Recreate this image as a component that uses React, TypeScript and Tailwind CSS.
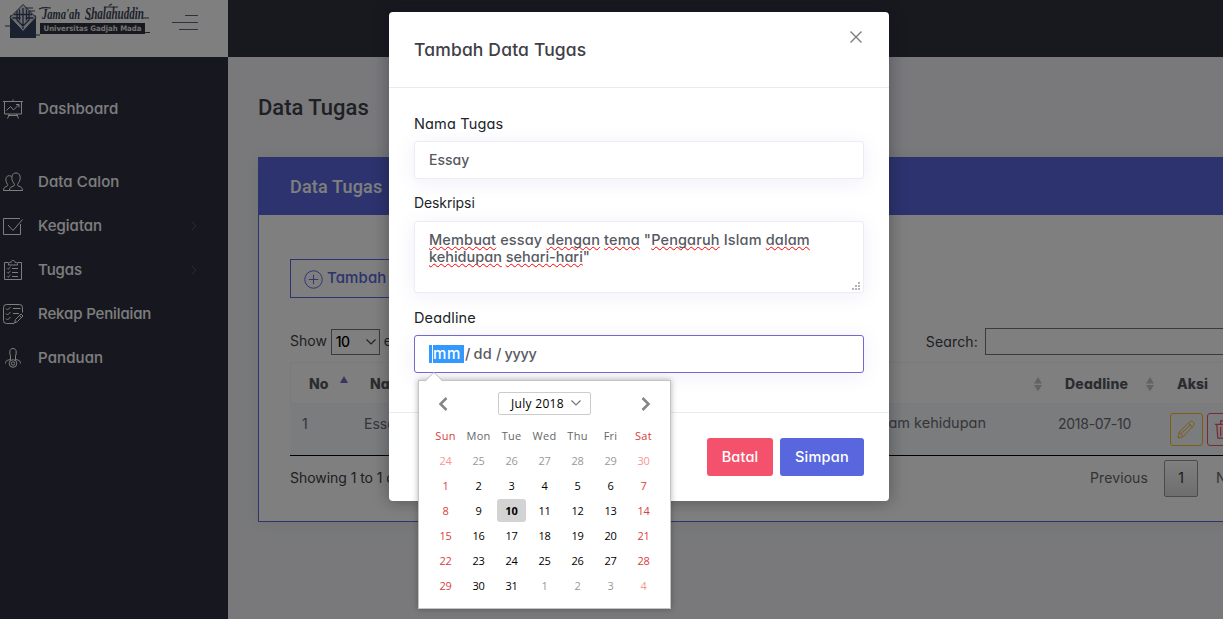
import type { ReactNode } from "react";

const Svg = ({ children, className }: { children: ReactNode; className?: string }) => (
  <svg viewBox="0 0 20 20" fill="none" stroke="currentColor" strokeWidth="1" className={className ?? "size-5 shrink-0"}>
    {children}
  </svg>
);

const BoardIcon = () => (
  <Svg>
    <path d="M0 2.500h20M1.500 2.500v12.500h17v-12.500M10 .5v2M4.500 19.500l2-4.500M15.500 19.500l-2-4.500M5 16.500h10" />
    <path d="M3.500 11.500l4-4 3 3.500 5.500-5.500M13 5.500h3v3" />
  </Svg>
);
const UsersIcon = () => (
  <Svg>
    <path d="M6.500 18.500h13c0-3-1.500-3.500-4.500-4.700-.8-.5-.5-1.700 0-2.300 2-2.500 2.500-5 2-7.500C16.500 1.800 15 1 13 1S9.500 1.800 9 4c-.5 2.500 0 5 2 7.500.5.600.8 1.800 0 2.300-3 1.200-4.500 1.700-4.500 4.700z" />
    <path d="M8.500 4.500C6 2.800 3.300 4 3 6.500c-.3 2.300.2 4 1.500 5.700.5.800.3 1.500-.3 1.800C2 15 .5 15.500.5 18.500h6" />
  </Svg>
);
const CheckIcon = () => (
  <Svg>
    <path d="M17.500 8v10.500H.5v-16H17M5 9l5 5.500 9.500-11" />
  </Svg>
);
const ClipboardIcon = () => (
  <Svg>
    <path d="M5.500 2.500H1.500v17h17v-17h-4M5.500 5h9V3.500c-.3-1-1.500-1-2.500-1C12 .9 11 .5 10 .5S8 .9 8 2.500c-1 0-2.200 0-2.500 1z" />
    <path d="M9 8.500h6M9 12.500h6M9 16.500h6M4 8.300l1 1L7.500 7M4 12.300l1 1L7.500 11M4 16.300l1 1L7.500 15" />
  </Svg>
);
const ListPenIcon = () => (
  <Svg>
    <path d="M11 19.500H3.500a3 3 0 0 1-3-3v-13a3 3 0 0 1 3-3h13a3 3 0 0 1 3 3v5" />
    <path d="M3 4.500L4.500 6l3-3M3 9.500L4.500 11l3-3M3 14.500L4.500 16l3-3M10 4.500h7.500M10 9.500h6" />
    <path d="M11.500 19l1-3.500 5.500-5.500 2 2-5.500 5.500zM16.500 11.500l2 2" />
  </Svg>
);
const GuideIcon = () => (
  <Svg>
    <path d="M7.500 12V8c-.7-1.500-.7-2.500-.7-4C6.800 1.800 8 .5 10 .5S13.200 1.800 13.200 4c0 1.500 0 2.500-.7 4v4M2.500 15.500v-1C3 12.500 5 12 7.500 11.500M17.500 15.500v-1c-.5-2-2.500-2.500-5-3" />
    <circle cx="10" cy="15.500" r="3.800" />
    <circle cx="10" cy="15.500" r="1.700" />
  </Svg>
);

const menu: { label: string; icon: ReactNode; text: string; arrow?: boolean }[] = [
  { label: "Data Calon", icon: <UsersIcon />, text: "tracking-[0.1px]" },
  { label: "Kegiatan", icon: <CheckIcon />, text: "", arrow: true },
  { label: "Tugas", icon: <ClipboardIcon />, text: "-tracking-[0.05px]", arrow: true },
  { label: "Rekap Penilaian", icon: <ListPenIcon />, text: "-tracking-[0.13px]" },
  { label: "Panduan", icon: <GuideIcon />, text: "tracking-[0.12px]" },
];

const Item = ({ label, icon, text, arrow }: { label: string; icon: ReactNode; text: string; arrow?: boolean }) => (
  <div className="flex h-11 items-center pl-[3px] pr-[30px] text-[#fdfdfd]">
    {icon}
    <span className={"ml-[15px] flex-1 pt-px text-[15px] font-medium " + text}>{label}</span>
    {arrow && (
      <svg viewBox="0 0 8 10" className="h-2.5 w-2 text-[#525672]" fill="none" stroke="currentColor">
        <path d="M2 1l4 4-4 4" />
      </svg>
    )}
  </div>
);

const Logo = () => (
  <svg viewBox="0 0 152 42" className="h-[42px] w-[152px] shrink-0">
    <path d="M10 15.500h26V38H10z" fill="#34425f" />
    <path d="M23 4.500L36 17.500 23 31.500 10 17.500z" fill="#d6d9e0" stroke="#38435f" strokeWidth="1" />
    <path d="M23 8v21M14 14.500h18M17 11v9l6 6 6-6v-9M19.500 9.500v11M26.500 9.500v11M12.500 18h8M25.500 18h8" stroke="#38435f" strokeWidth="1.300" fill="none" />
    <path d="M5 26h6M35 35h5M25 8h8M29 11h6" stroke="#38435f" strokeWidth="1" />
    <text x="42" y="18.500" fontFamily="Liberation Serif, serif" fontWeight="700" fontStyle="italic" fontSize="15" textLength="38" lengthAdjust="spacingAndGlyphs" fill="#3b4357">Jama'ah</text>
    <text x="85" y="18.500" fontFamily="Liberation Serif, serif" fontWeight="700" fontStyle="italic" fontSize="16" textLength="59" lengthAdjust="spacingAndGlyphs" fill="#3b4357">Shalahuddin</text>
    <path d="M39 9q4-2 12-1M85 18q5 3 8-1M104 7h14M109 5.500l3-1.500M143 18h6M144 32.500h6" stroke="#3b4357" strokeWidth="1.200" fill="none" />
    <path d="M40 23h105v11H40z" fill="#30323f" />
    <text x="43.500" y="31.300" fontFamily="DejaVu Sans, sans-serif" fontWeight="700" fontSize="7.500" textLength="98" lengthAdjust="spacingAndGlyphs" fill="#e4e4e8">Universitas Gadjah Mada</text>
  </svg>
);

const SortIcon = ({ up }: { up?: boolean }) =>
  up ? (
    <svg viewBox="0 0 8 14" className="h-3.5 w-2"><path d="M0 7L4 0l4 7z" fill="#716aca" /></svg>
  ) : (
    <svg viewBox="0 0 8 14" className="h-3.5 w-2"><path d="M0 6.500L4 0l4 6.500zM0 8h8l-4 6.500z" fill="#c7c7c9" /></svg>
  );

const Bad = ({ children }: { children: ReactNode }) => (
  <span className="underline decoration-[#f00] decoration-wavy decoration-[1px] underline-offset-[1px] [text-decoration-skip-ink:none]">{children}</span>
);

const days = ["Sun", "Mon", "Tue", "Wed", "Thu", "Fri", "Sat"];
const dates = Array.from({ length: 42 }, (_, i) => (i < 7 ? 24 + i : i - 6 > 31 ? i - 37 : i - 6));
const dayClass = (i: number) => {
  const outside = i < 7 || i > 37;
  const weekend = i % 7 === 0 || i % 7 === 6;
  if (weekend) return outside ? "text-[#f7978f]" : "text-[#d8403c]";
  return outside ? "text-[#999]" : "text-black";
};

const Calendar = () => (
  <div className="absolute left-[29px] top-[368px] h-[229px] w-[253px] border border-[#c4c4c4] bg-white px-[10px] font-['Open_Sans',sans-serif] text-[11px] shadow-[0_0_6px_rgba(0,0,0,0.3)]">
    <svg viewBox="0 0 20 10" className="absolute left-[5px] -top-[9px] h-2.5 w-5">
      <path d="M1 10l9-9 9 9z" fill="#fff" />
      <path d="M0.500 9L10 .5 19 9" fill="none" stroke="#c4c4c4" />
    </svg>
    <div className="flex h-[42px] items-center justify-between px-[9px] pt-[3px]">
      <svg viewBox="0 0 10 14" className="h-3.5 w-2.5" fill="none" stroke="#858585" strokeWidth="2.500"><path d="M8.500 1L2.500 7l6 6" /></svg>
      <div className="flex h-[23px] w-[93px] items-center rounded-[2px] border border-[#ccc] pl-[12px] text-[12px] tracking-[0.3px] text-black">
        <span className="pt-px">July 2018</span>
        <svg viewBox="0 0 10 6" className="mb-[2px] ml-[7px] h-1.5 w-2.5" fill="none" stroke="#777" strokeWidth="1.200"><path d="M.5 .5L5 5 9.500 .5" /></svg>
      </div>
      <svg viewBox="0 0 10 14" className="h-3.5 w-2.5" fill="none" stroke="#858585" strokeWidth="2.500"><path d="M1.500 1l6 6-6 6" /></svg>
    </div>
    <div className="grid grid-cols-[repeat(7,33px)] auto-rows-[25px] text-center leading-[25px]">
      {days.map((d, i) => (
        <span key={d} className={"tracking-[0.25px] " + (i % 6 === 0 ? "text-[#d8403c]" : "text-[#666]")}>{d}</span>
      ))}
      {dates.map((d, i) =>
        i === 16 ? (
          <span key={i} className="mx-[2px] my-[1px] rounded-[3px] bg-[#d3d3d3] font-bold leading-[23px] text-black">{d}</span>
        ) : (
          <span key={i} className={"-tracking-[0.2px] " + dayClass(i)}>{d}</span>
        )
      )}
    </div>
  </div>
);

const field = "rounded-[3px] border bg-white px-[14px] font-medium text-[#575962] shadow-[0_3px_20px_0_rgba(113,106,202,0.11)]";

const Modal = () => (
  <div className="absolute left-[389px] top-[12px] h-[489px] w-[500px] rounded-[4px] bg-white shadow-[0_0_15px_1px_rgba(20,18,28,0.35)]">
    <div className="flex h-[76px] justify-between border-b border-[#e9ecef] pl-[25px] pr-[27px]">
      <h5 className="pt-[26px] text-[17.5px] font-medium leading-6 tracking-[0.16px] text-[#3f4047]">Tambah Data Tugas</h5>
      <svg viewBox="0 0 12 12" className="mt-[19px] size-3" fill="none" stroke="#7a7c80" strokeWidth="1.400"><path d="M.5 .5l11 11M11.500 .5l-11 11" /></svg>
    </div>
    <div className="flex h-[325px] flex-col border-b border-[#e9ecef] px-[25px] pt-[26px] text-[14.5px] leading-5 text-[#212529]">
      <label className="tracking-[0.15px]">Nama Tugas</label>
      <div className={field + " mt-[7px] flex h-[38px] items-center border-[#ebedf2] text-[14px]"}>Essay</div>
      <label className="mt-[14px] text-[14px] leading-5 -tracking-[0.1px]">Deskripsi</label>
      <div className={field + " relative mt-[8px] h-[72px] whitespace-nowrap border-[#ebedf2] pt-[9px] text-[14.5px] leading-[17px] tracking-[0.14px]"}>
        <Bad>Membuat</Bad> essay <Bad>dengan</Bad> <Bad>tema</Bad> "<Bad>Pengaruh</Bad> Islam <Bad>dalam</Bad>
        <div className="-tracking-[0.02px]"><Bad>kehidupan</Bad> <Bad>sehari-hari</Bad>"</div>
        <svg viewBox="0 0 8 8" className="absolute bottom-[2px] right-[3px] size-2" fill="#b5b5b5">
          <path d="M6 0h2v2H6zM3 3h2v2H3zM6 3h2v2H6zM0 6h2v2H0zM3 6h2v2H3zM6 6h2v2H6z" />
        </svg>
      </div>
      <label className="mt-[15px] tracking-[0.15px]">Deadline</label>
      <div className={field + " mt-[7px] flex h-[38px] items-center border-[#716aca] text-[14.5px]"}>
        <span className="flex h-[18px] w-[35px] items-center bg-[#3399ff] text-white">
          <span className="ml-[3px] h-[18px] w-px bg-white" />
          <span className="text-[15px] tracking-[0.6px]">mm</span>
        </span>
        <span className="ml-px">/</span>
        <span className="ml-[3px] tracking-[0.4px]">dd</span>
        <span className="ml-[4px]">/</span>
        <span className="ml-[3px] -tracking-[0.3px]">yyyy</span>
      </div>
    </div>
    <div className="flex justify-end gap-[7px] pr-[25px] pt-[25px] text-[14.5px] font-medium leading-5 text-white">
      <button className="h-[38px] w-[66px] rounded-[3px] bg-[#f4516c] pb-px tracking-[0.15px]">Batal</button>
      <button className="h-[38px] w-[84px] rounded-[3px] bg-[#5867dd] pb-px tracking-[0.25px]">Simpan</button>
    </div>
    <Calendar />
  </div>
);

export default function App() {
  return (
    <div className="relative flex h-[619px] w-[1223px] overflow-hidden bg-[#f2f3f8] font-[Inter,sans-serif] [font-feature-settings:'cv11']">
      <aside className="w-[228px] shrink-0 bg-[#2f303f]">
        <div className="flex h-[57px] items-start bg-white">
          <Logo />
          <svg viewBox="0 0 26 16" className="ml-[20px] mt-[15px] h-4 w-[26px]" stroke="#5c6080"><path d="M13 .5h13M0 7.500h26M7 14.500h19" /></svg>
        </div>
        <div className="pt-[30px]">
          <Item label="Dashboard" icon={<BoardIcon />} text="tracking-[0.08px]" />
          <div className="h-[29px]" />
          {menu.map((m) => <Item key={m.label} {...m} />)}
        </div>
      </aside>

      <main className="flex w-[1050px] shrink-0 flex-col">
        <header className="h-[57px] bg-[#30303f]" />
        <h3 className="mt-[36px] pl-[30px] font-[Roboto,sans-serif] text-[22px] font-medium leading-[30px] text-[#3f4047]">Data Tugas</h3>
        <section className="ml-[30px] mt-[34px] flex h-[365px] flex-col border border-[#5867dd] bg-white shadow-[0_1px_15px_1px_rgba(69,65,78,0.08)]">
          <div className="flex h-[57px] items-center bg-[#5867dd] pl-[31px] font-[Roboto,sans-serif] text-[18px] font-medium tracking-[0.18px] text-white">Data Tugas</div>
          <div className="flex flex-col pl-[31px] pt-[44px] text-[14px] text-[#3f4047]">
            <button className="flex h-[39px] w-[170px] items-center whitespace-nowrap border border-[#5867dd] pl-[13px] text-[15px] font-medium tracking-[0.1px] text-[#5867dd]">
              <svg viewBox="0 0 20 20" className="mr-[4px] mt-[2px] size-[19px]" fill="none" stroke="currentColor"><circle cx="10" cy="10" r="9.200" /><path d="M10 5v10M5 10h10" /></svg>
              Tambah Data
            </button>
            <div className="mt-[30px] flex h-[27px] items-center">
              <span className="pb-[2px]">Show</span>
              <span className="ml-[4px] flex h-[26px] w-[49px] items-center justify-between border border-[#777] pl-[4px] pr-[3px] text-[14px] font-medium text-black">
                <span className="-tracking-[0.6px]">10</span>
                <svg viewBox="0 0 10 6" className="h-1.5 w-2.5" fill="none" stroke="#444" strokeWidth="1.200"><path d="M.5 .5L5 5 9.500 .5" /></svg>
              </span>
              <span className="ml-[4px] w-[542px] pb-[2px]">entries</span>
              <span className="w-[52px] tracking-[0.15px]">Search:</span>
              <span className="ml-[7px] h-[27px] w-[260px] border border-[#777]" />
            </div>
            <div className="mt-[7px] grid grid-cols-[62px_194px_500px_112px_120px] border-b border-black">
              <div className="col-span-5 grid h-[42px] grid-cols-subgrid items-center border border-[#f4f5f8] pt-px font-extrabold text-[#575962] [&>div]:flex [&>div]:items-center [&>div]:justify-between">
                <div className="pl-[18px]"><span className="tracking-[0.1px]">No</span><span className="mb-[2px] mr-[4px]"><SortIcon up /></span></div>
                <div className="pl-[18px] pr-[4px] tracking-[0.1px]">Nama Tugas<SortIcon /></div>
                <div className="pl-[18px] pr-[4px]">Deskripsi<SortIcon /></div>
                <div className="pl-[19px] pr-[4px] tracking-[0.2px]">Deadline<SortIcon /></div>
                <div className="pl-[19px]">Aksi</div>
              </div>
              <div className="col-span-5 grid h-[51px] grid-cols-subgrid bg-[#f4f8fb] text-[#6a6c75]">
                <span className="pl-[12px] pt-[9px]">1</span>
                <span className="pl-[12px] pt-[9px]">Essay</span>
                <span className="flex justify-end whitespace-nowrap pr-[60px] pt-[9px] text-[14.5px] leading-5">Membuat essay dengan tema "Pengaruh Islam dalam kehidupan</span>
                <span className="pl-[12px] pt-[9px] -tracking-[0.26px]">2018-07-10</span>
                <span className="flex gap-[4px] pl-[12px] pt-[9px]">
                  <span className="grid size-[33px] place-items-center rounded-[3px] border border-[#ffb822] text-[#ffb822]">
                    <Svg className="size-[19px]"><path d="M1 19l1.300-6L13.500 1.800c1-1 2.500-.8 3.600.3 1.200 1.200 1.400 2.700.4 3.700L6.500 17.500zM2.300 13l4.200 4.500M12 3.300l4.500 4.500M4 14.800L14.800 4.500M1.200 17l1.500 1.500" /></Svg>
                  </span>
                  <span className="grid size-[33px] place-items-center rounded-[3px] border border-[#f4516c] text-[#f4516c]">
                    <Svg className="size-[19px]"><path d="M1 4.500h18M3 5l1 14h12l1-14M7 4V1h6v3M7 7v10M10 7v10M13 7v10" strokeWidth="1.300" /></Svg>
                  </span>
                </span>
              </div>
            </div>
            <div className="mt-[4px] flex h-[37px] items-center">
              <span className="w-[800px] pb-[2px] -tracking-[0.05px]">Showing 1 to 1 of 1 entries</span>
              <span className="w-[74px] pb-[2px] tracking-[0.1px] text-[#666]">Previous</span>
              <span className="grid h-[37px] w-[34px] place-items-center rounded-[2px] border border-[#979797] bg-gradient-to-b from-white to-[#dcdcdc] pb-[2px] text-[#333]">1</span>
              <span className="ml-[18px] pb-[2px] text-[#666]">Next</span>
            </div>
          </div>
        </section>
      </main>

      <div className="absolute inset-0 bg-black/50" />
      <Modal />
    </div>
  );
}
